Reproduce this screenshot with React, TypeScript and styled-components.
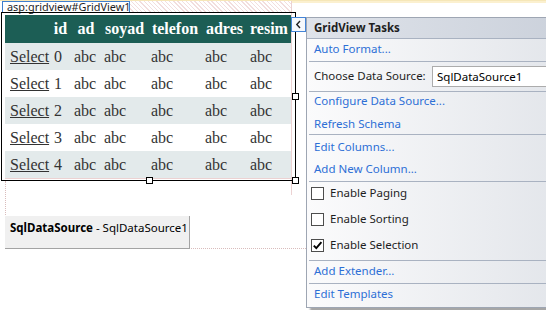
import React from 'react';
import styled, { createGlobalStyle } from 'styled-components';

const GlobalStyle = createGlobalStyle`
  html, body {
    margin: 0;
    padding: 0;
    background: #ffffff;
  }
  body {
    width: 546px;
    height: 310px;
    overflow: hidden;
  }
`;

const UI_FONT = `'Segoe UI', 'Noto Sans', 'Liberation Sans', sans-serif`;
const PINK = '#ecd2d2';
const RULE = '#a9b2c1';

const Surface = styled.div`
  position: relative;
  width: 546px;
  height: 310px;
  overflow: hidden;
  box-sizing: border-box;
  border-top: 1px solid #f6e7b8;
  background: #ffffff;
  font-family: ${UI_FONT};
`;

const Canvas = styled.div`
  display: flex;
  align-items: flex-start;
`;

const Designer = styled.div`
  position: relative;
  width: 291px;
  border-right: 1px solid ${PINK};
  display: flex;
  flex-direction: column;

  &::after {
    content: '';
    position: absolute;
    right: -1px;
    top: 100%;
    width: 1px;
    height: 14px;
    background: ${PINK};
  }
`;

const OuterMargin = styled.div`
  flex: 1;
`;

const CreamStrip = styled.div`
  height: 2px;
  background: #fbf0cf;
`;

const TagRow = styled.div`
  display: flex;
  height: 11px;
`;

const TagLabel = styled.div`
  margin-left: 2px;
  box-sizing: border-box;
  width: 128px;
  height: 11px;
  border: 1px solid #3f7fce;
  border-bottom: none;
  background: #ffffff;
  color: #1e1e1e;
  font-size: 10.9px;
  line-height: 10px;
  padding-left: 4px;
  white-space: nowrap;
`;

const Hatch = styled.div`
  flex: 1;
  background: repeating-linear-gradient(
    45deg,
    #ffffff 0px,
    #ffffff 2px,
    #f2dede 2px,
    #f2dede 3px
  );
`;

const Selection = styled.div`
  position: relative;
  margin-left: 1px;
  width: 295px;
  box-sizing: border-box;
  border: 1px solid #000000;
  padding: 2px 4px 1px 3px;
`;

const Handle = styled.span<{ $h: 'center' | 'right'; $v: 'middle' | 'bottom' }>`
  position: absolute;
  width: 7px;
  height: 7px;
  box-sizing: border-box;
  background: #ffffff;
  border: 1px solid #000000;
  ${({ $h }) => ($h === 'right' ? 'right: -4px;' : 'left: 50%; margin-left: -3px;')}
  ${({ $v }) => ($v === 'bottom' ? 'bottom: -4px;' : 'top: 50%; margin-top: -4px;')}
`;

const Grid = styled.table`
  width: 286px;
  border-collapse: collapse;
  table-layout: fixed;
  font-family: 'Liberation Serif', 'Times New Roman', serif;
  font-size: 16px;
  color: #333333;
  border-bottom: 1px solid ${PINK};
`;

const HeadRow = styled.tr`
  background: #1c5e55;
  color: #ffffff;
`;

const HeadCell = styled.th`
  height: 28px;
  padding: 0;
  font-weight: bold;
  text-align: center;
  white-space: nowrap;
`;

const DataRow = styled.tr<{ $alt: boolean }>`
  background: ${({ $alt }) => ($alt ? '#ffffff' : '#e3eaeb')};
`;

const Cell = styled.td<{ $pad: number }>`
  height: 27px;
  padding: 0 0 0 ${({ $pad }) => $pad}px;
  text-align: left;
  white-space: nowrap;
`;

const SelectLink = styled.span`
  color: #333333;
  text-decoration: underline;
`;

const Tray = styled.div`
  margin-left: 5px;
  height: 67px;
  border-left: 1px dotted #d9bcbc;
  border-bottom: 1px dotted #d9bcbc;
  display: flex;
  align-items: flex-end;
`;

const SourceTile = styled.div`
  margin-left: -1px;
  margin-bottom: -1px;
  width: 185px;
  height: 33px;
  box-sizing: border-box;
  background: #f0f0f0;
  border-right: 1px solid #a3a3a3;
  border-bottom: 1px solid #a3a3a3;
  padding: 4px 0 0 5px;
  font-size: 11.5px;
  color: #000000;
  white-space: nowrap;
`;

const SmartTag = styled.div`
  position: absolute;
  left: 291px;
  top: 16px;
  width: 15px;
  height: 15px;
  box-sizing: border-box;
  border: 1px solid #4484d6;
  background: #f5f8fc;
  display: flex;
  align-items: center;
  justify-content: center;
  z-index: 2;
`;

const Panel = styled.div`
  position: absolute;
  left: 306px;
  top: 16px;
  width: 262px;
  height: 291px;
  box-sizing: border-box;
  border: 1px solid #9ea6b3;
  background: linear-gradient(to right, #fbfbfc 0%, #e2e5ea 100%);
  box-shadow: 4px 4px 2px rgba(0, 0, 0, 0.35);
  display: flex;
  flex-direction: column;
  color: #1e1e1e;
  font-size: 11.5px;
  z-index: 1;
`;

const PanelHeader = styled.div`
  height: 21px;
  flex-shrink: 0;
  box-sizing: border-box;
  border-bottom: 1px solid ${RULE};
  background: linear-gradient(to right, #dfe3ea 0%, #cbd1db 100%);
  display: flex;
  align-items: center;
  padding: 0 0 2px 7px;
  font-weight: bold;
  color: #1e1e1e;
`;

const Block = styled.div<{ $h?: number; $pt: number; $gap?: number; $sep?: boolean }>`
  ${({ $h }) => ($h ? `height: ${$h}px; flex-shrink: 0;` : 'flex: 1;')}
  box-sizing: border-box;
  margin-left: 2px;
  padding-top: ${({ $pt }) => $pt}px;
  border-top: ${({ $sep }) => ($sep ? `1px solid ${RULE}` : 'none')};
  display: flex;
  flex-direction: column;
  gap: ${({ $gap }) => $gap ?? 0}px;
`;

const TaskLink = styled.div`
  height: 19px;
  flex-shrink: 0;
  box-sizing: border-box;
  display: flex;
  align-items: center;
  padding: 0 0 2px 5px;
  color: #2d6fd6;
  white-space: nowrap;
`;

const SourceRow = styled.div`
  height: 29px;
  display: flex;
  align-items: center;
  padding-left: 5px;
  white-space: nowrap;
`;

const SourceLabel = styled.span`
  width: 118px;
  flex-shrink: 0;
  padding-bottom: 2px;
`;

const Combo = styled.div`
  width: 140px;
  height: 21px;
  box-sizing: border-box;
  border: 1px solid #acacac;
  background: #ffffff;
  display: flex;
  align-items: center;
  padding: 0 0 1px 4px;
  color: #000000;
`;

const CheckRow = styled.div`
  height: 19px;
  flex-shrink: 0;
  display: flex;
  align-items: center;
  gap: 6px;
  padding-left: 2px;
  white-space: nowrap;
`;

const CheckText = styled.span`
  padding-bottom: 2px;
`;

const CheckBox = styled.span`
  width: 13px;
  height: 13px;
  box-sizing: border-box;
  border: 1px solid #4d4d4d;
  background: #ffffff;
  display: flex;
  align-items: center;
  justify-content: center;
  flex-shrink: 0;
`;

const columns = [
  { key: 'select', title: '', width: 45, pad: 5 },
  { key: 'id', title: 'id', width: 21, pad: 4 },
  { key: 'ad', title: 'ad', width: 30, pad: 3 },
  { key: 'soyad', title: 'soyad', width: 47, pad: 3 },
  { key: 'telefon', title: 'telefon', width: 54, pad: 3 },
  { key: 'adres', title: 'adres', width: 45, pad: 3 },
  { key: 'resim', title: 'resim', width: 44, pad: 3 },
];

const rows = [0, 1, 2, 3, 4];

const CheckOption = ({ label, checked }: { label: string; checked?: boolean }) => (
  <CheckRow>
    <CheckBox>
      {checked && (
        <svg width="11" height="11" viewBox="0 0 11 11">
          <path d="M1.8 5.6 L4.3 8.2 L9.4 2.2" fill="none" stroke="#000" strokeWidth="1.9" />
        </svg>
      )}
    </CheckBox>
    <CheckText>{label}</CheckText>
  </CheckRow>
);

const TasksPanel = () => (
  <Panel>
    <PanelHeader>GridView Tasks</PanelHeader>
    <Block $h={22} $pt={1}>
      <TaskLink>Auto Format...</TaskLink>
    </Block>
    <Block $h={30} $pt={0} $sep>
      <SourceRow>
        <SourceLabel>Choose Data Source:</SourceLabel>
        <Combo>SqlDataSource1</Combo>
      </SourceRow>
    </Block>
    <Block $h={43} $pt={0} $gap={4} $sep>
      <TaskLink>Configure Data Source...</TaskLink>
      <TaskLink>Refresh Schema</TaskLink>
    </Block>
    <Block $h={47} $pt={3} $gap={3} $sep>
      <TaskLink>Edit Columns...</TaskLink>
      <TaskLink>Add New Column...</TaskLink>
    </Block>
    <Block $h={79} $pt={2} $gap={7} $sep>
      <CheckOption label="Enable Paging" />
      <CheckOption label="Enable Sorting" />
      <CheckOption label="Enable Selection" checked />
    </Block>
    <Block $h={23} $pt={1} $sep>
      <TaskLink>Add Extender...</TaskLink>
    </Block>
    <Block $pt={1} $sep>
      <TaskLink>Edit Templates</TaskLink>
    </Block>
  </Panel>
);

const App = () => (
  <>
    <GlobalStyle />
    <Surface>
      <Canvas>
        <Designer>
          <TagRow>
            <TagLabel>asp:gridview#GridView1</TagLabel>
            <Hatch />
          </TagRow>
          <Selection>
            <Grid>
              <colgroup>
                {columns.map((c) => (
                  <col key={c.key} style={{ width: c.width }} />
                ))}
              </colgroup>
              <thead>
                <HeadRow>
                  {columns.map((c) => (
                    <HeadCell key={c.key}>{c.title}</HeadCell>
                  ))}
                </HeadRow>
              </thead>
              <tbody>
                {rows.map((id, i) => (
                  <DataRow key={id} $alt={i % 2 === 1}>
                    {columns.map((c) => (
                      <Cell key={c.key} $pad={c.pad}>
                        {c.key === 'select' ? (
                          <SelectLink>Select</SelectLink>
                        ) : c.key === 'id' ? (
                          id
                        ) : (
                          'abc'
                        )}
                      </Cell>
                    ))}
                  </DataRow>
                ))}
              </tbody>
            </Grid>
            <Handle $h="right" $v="middle" />
            <Handle $h="center" $v="bottom" />
            <Handle $h="right" $v="bottom" />
          </Selection>
        </Designer>
        <OuterMargin>
          <CreamStrip />
        </OuterMargin>
      </Canvas>
      <Tray>
        <SourceTile>
          <b>SqlDataSource</b> - SqlDataSource1
        </SourceTile>
      </Tray>
      <SmartTag>
        <svg width="7" height="9" viewBox="0 0 7 9">
          <path d="M5 1 L1.8 4.5 L5 8" fill="none" stroke="#222" strokeWidth="1.4" />
        </svg>
      </SmartTag>
      <TasksPanel />
    </Surface>
  </>
);

export default App;
